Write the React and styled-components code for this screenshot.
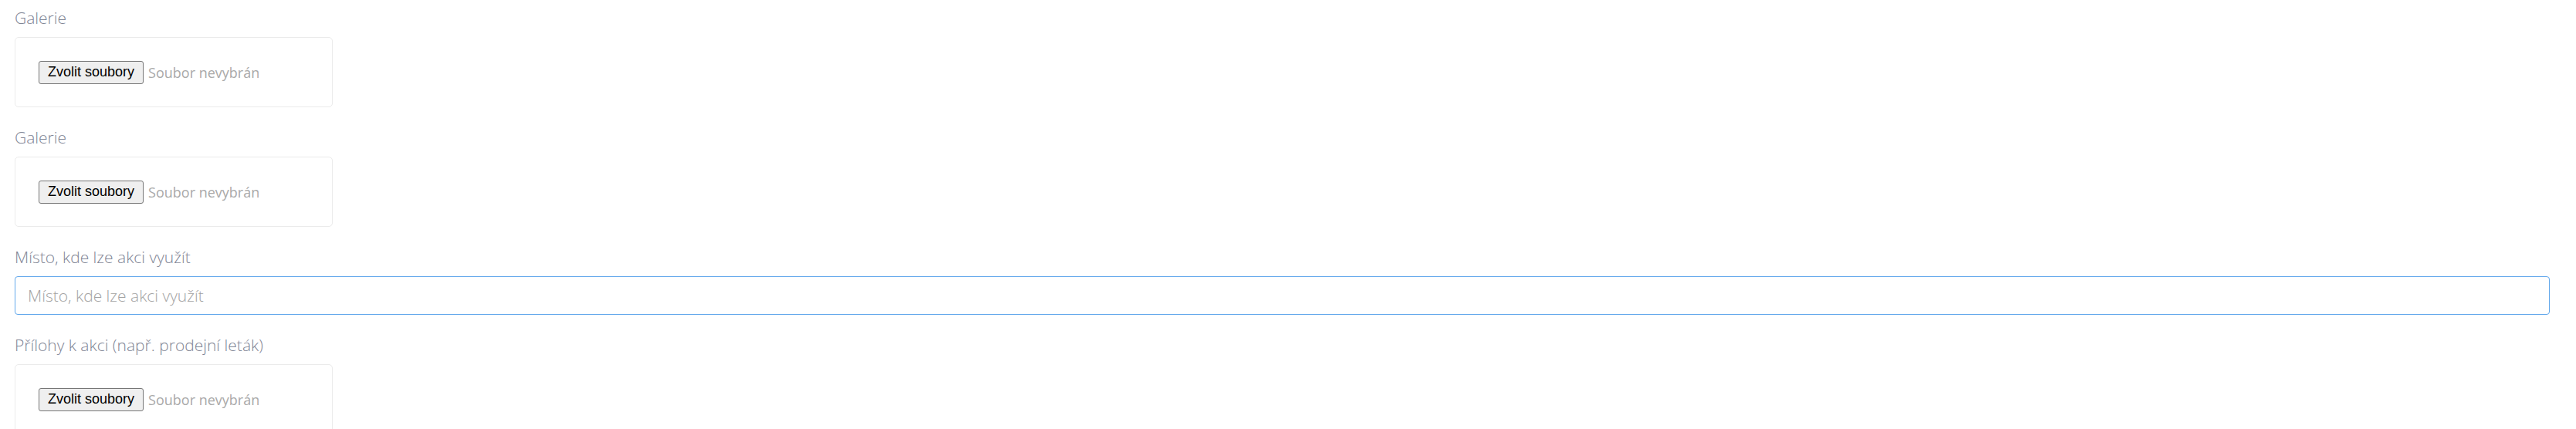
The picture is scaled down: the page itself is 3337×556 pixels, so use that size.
import React from "react"
import styled, { createGlobalStyle } from "styled-components"

const GlobalStyle = createGlobalStyle`
    html, body {
        margin: 0;
        padding: 0;
        background: #ffffff;
    }
    body {
        font-family: "Open Sans", "Liberation Sans", sans-serif;
    }
`

const fields = [
    { label: "Galerie", type: "file" },
    { label: "Galerie", type: "file" },
    { label: "Místo, kde lze akci využít", type: "text" },
    { label: "Přílohy k akci (např. prodejní leták)", type: "file" }
]

const FilePicker = () => (
    <FileBox>
        <PickButton type="button">Zvolit soubory</PickButton>
        <FileName>Soubor nevybrán</FileName>
    </FileBox>
)

const App = () => {
    return (
        <>
            <GlobalStyle />
            <Form>
                {fields.map((f, i) => (
                    <Group key={i}>
                        <Label>{f.label}</Label>
                        {f.type === "file"
                            ? <FilePicker />
                            : <TextInput placeholder={f.label} />
                        }
                    </Group>
                ))}
            </Form>
        </>
    )
}

export default App

const Form = styled.div
`
    display: flex;
    flex-direction: column;
    padding: 9px 34px 0 19px;
    height: 556px;
    box-sizing: border-box;
    overflow: hidden;
`

const Group = styled.div
`
    display: flex;
    flex-direction: column;
    margin-bottom: 25px;
`

const Label = styled.label
`
    display: block;
    font-family: "Open Sans", "Liberation Sans", sans-serif;
    font-weight: 300;
    font-size: 21px;
    line-height: 28px;
    color: #7f8595;
    margin-bottom: 11px;
`

const FileBox = styled.div
`
    display: flex;
    align-items: center;
    box-sizing: border-box;
    width: 412px;
    height: 91px;
    padding: 0 30px;
    border: 1px solid #ebebeb;
    border-radius: 5px;
    background: #fff;
`

const PickButton = styled.button
`
    font-family: Arial, "Liberation Sans", sans-serif;
    font-size: 18px;
    color: #000;
    height: 30px;
    padding: 0 11px;
    background: #efefef;
    border: 1px solid #767676;
    border-radius: 3px;
    margin-right: 6px;
    box-sizing: border-box;
`

const FileName = styled.span
`
    font-family: "Open Sans", "Liberation Sans", sans-serif;
    font-size: 18px;
    color: #a9a9a9;
`

const TextInput = styled.input
`
    box-sizing: border-box;
    width: 100%;
    height: 50px;
    padding: 0 16px;
    border: 1px solid #62a8ec;
    border-radius: 4px;
    outline: none;
    font-family: "Open Sans", "Liberation Sans", sans-serif;
    font-weight: 300;
    font-size: 21px;
    color: #555;

    &::placeholder {
        color: #a3a3a3;
    }
`
